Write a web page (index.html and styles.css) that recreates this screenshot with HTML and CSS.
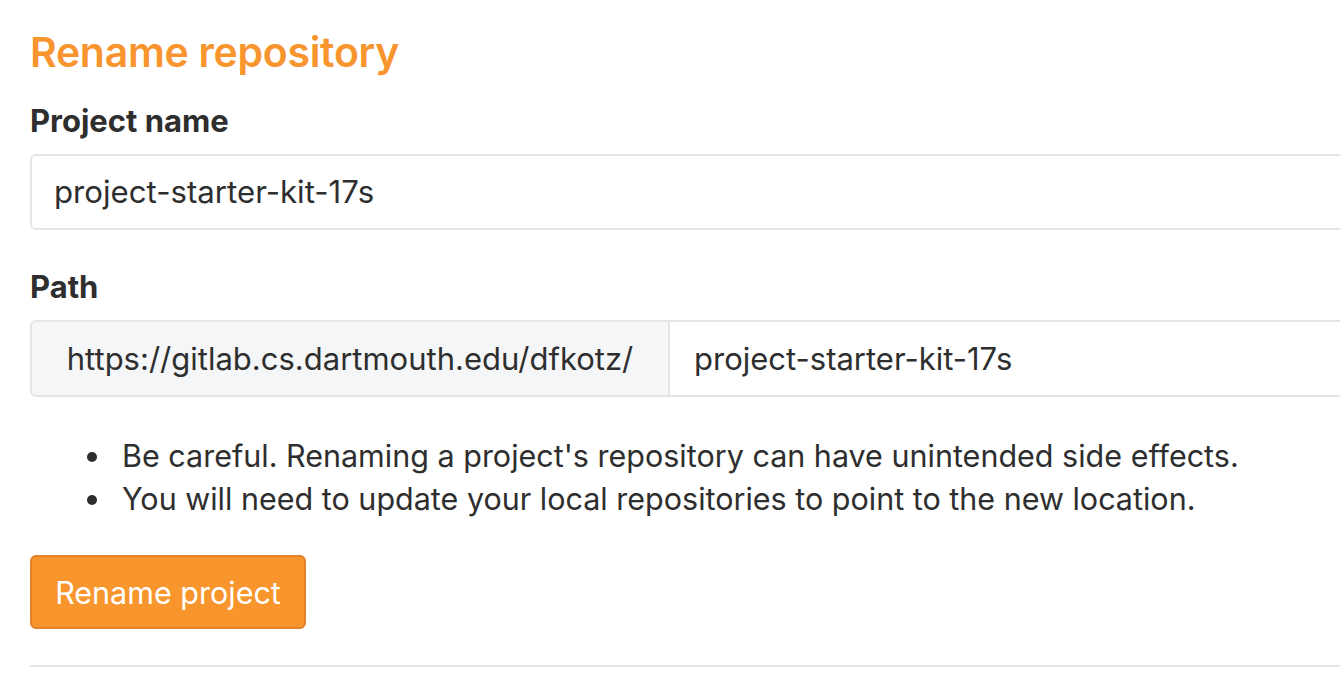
FILE: index.html
```html
<!DOCTYPE html>
<html>
<head>
<meta charset="utf-8">
<link rel="stylesheet" href="styles.css">
</head>
<body>
<div class="page">
  <h4 class="title">Rename repository</h4>
  <div class="field">
    <label class="label">Project name</label>
    <div class="input">project-starter-kit-17s</div>
  </div>
  <div class="field field-path">
    <label class="label">Path</label>
    <div class="group">
      <div class="prefix">https://gitlab.cs.dartmouth.edu/dfkotz/</div>
      <div class="group-input">project-starter-kit-17s</div>
    </div>
  </div>
  <ul class="notes">
    <li>Be careful. Renaming a project's repository can have unintended side effects.</li>
    <li>You will need to update your local repositories to point to the new location.</li>
  </ul>
  <button class="btn">Rename project</button>
  <hr class="rule">
</div>
</body>
</html>
```
FILE: styles.css
```css
html, body {
  margin: 0;
  padding: 0;
  background: #fff;
  overflow: hidden;
}
body {
  font-family: Inter, "Noto Sans", sans-serif;
  color: #2e2e2e;
}
.page {
  padding: 28px 0 0 30px;
  width: 1400px;
}
.title {
  margin: 0;
  font-size: 41px;
  line-height: 48px;
  font-weight: 600;
  color: #f9952e;
  letter-spacing: -0.3px;
}
.field {
  margin-top: 27px;
}
.field-path {
  margin-top: 39px;
}
.label {
  display: block;
  font-size: 31px;
  line-height: 36px;
  font-weight: 700;
  margin-bottom: 15px;
}
.input {
  box-sizing: border-box;
  height: 76px;
  border: 2px solid #e5e5e5;
  border-radius: 6px;
  padding: 0 22px;
  font-size: 31.2px;
  display: flex;
  align-items: center;
}
.group {
  box-sizing: border-box;
  height: 77px;
  border: 2px solid #e5e5e5;
  border-radius: 6px;
  display: flex;
  font-size: 31px;
}
.prefix {
  background: #f5f6f8;
  border-right: 2px solid #e5e5e5;
  width: 638px;
  box-sizing: border-box;
  display: flex;
  align-items: center;
  justify-content: center;
  border-radius: 4px 0 0 4px;
}
.group-input {
  flex: 1;
  display: flex;
  align-items: center;
  padding-left: 24px;
}
.notes {
  list-style: none;
  margin: 37px 0 0 0;
  padding-left: 57px;
  font-size: 30.5px;
  line-height: 43px;
}
.notes li {
  display: flex;
  align-items: center;
}
.notes li::before {
  content: "";
  flex: none;
  width: 10px;
  height: 10px;
  border-radius: 50%;
  background: #2e2e2e;
  margin-right: 25px;
  margin-top: 2px;
}
.btn {
  display: block;
  margin-top: 35px;
  box-sizing: border-box;
  width: 276px;
  height: 74px;
  background: #f8952c;
  border: 2px solid #e5832a;
  border-radius: 6px;
  color: #fff;
  font-family: inherit;
  font-size: 30.5px;
  padding: 0;
}
.rule {
  margin: 36px 0 0 0;
  border: 0;
  border-top: 2px solid #e5e5e5;
}
```
